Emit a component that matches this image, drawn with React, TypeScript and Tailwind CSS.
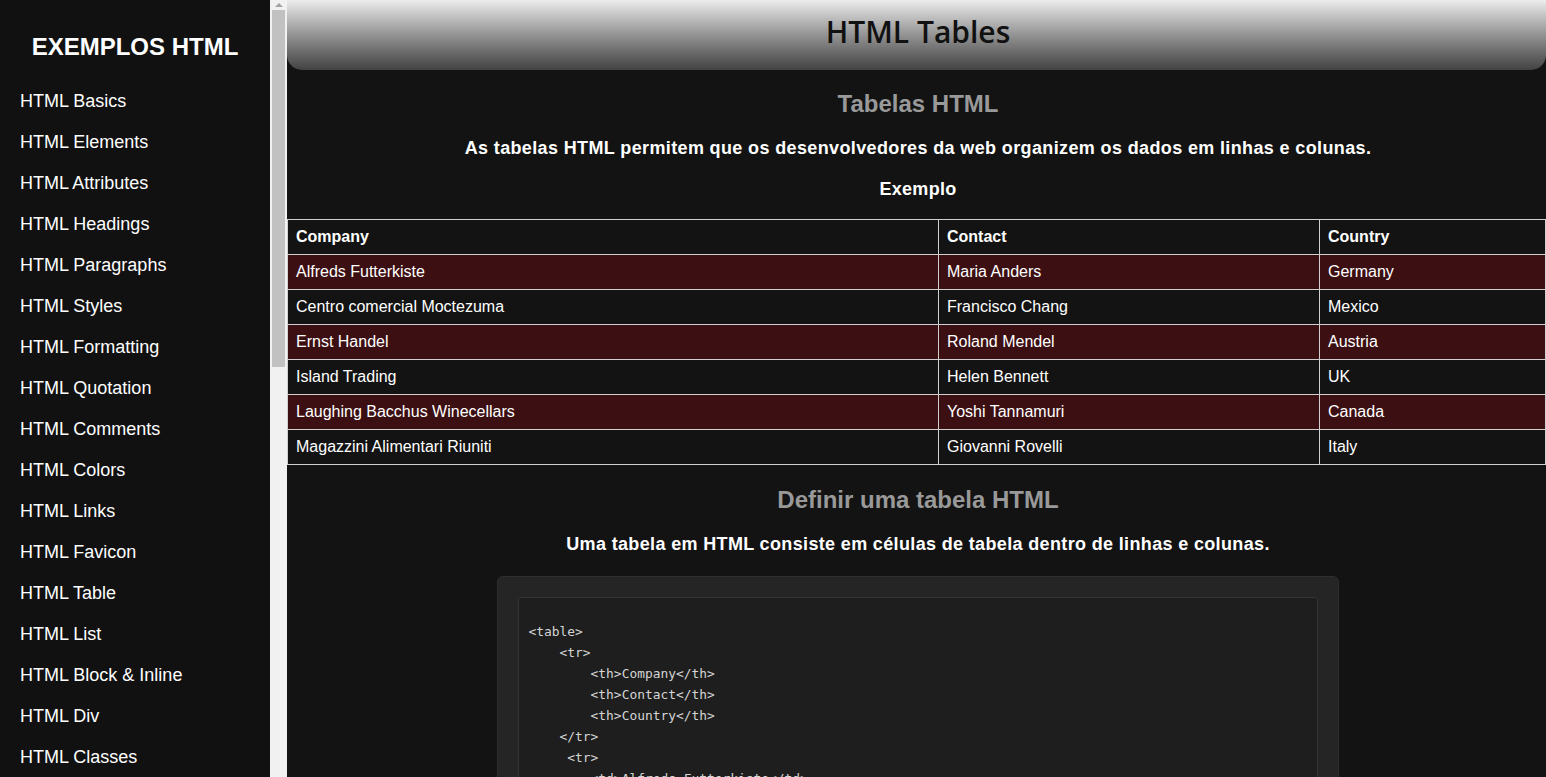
import React from 'react';

const links = [
  'HTML Basics',
  'HTML Elements',
  'HTML Attributes',
  'HTML Headings',
  'HTML Paragraphs',
  'HTML Styles',
  'HTML Formatting',
  'HTML Quotation',
  'HTML Comments',
  'HTML Colors',
  'HTML Links',
  'HTML Favicon',
  'HTML Table',
  'HTML List',
  'HTML Block & Inline',
  'HTML Div',
  'HTML Classes',
  'HTML Id',
  'HTML Iframes',
];

const rows = [
  ['Alfreds Futterkiste', 'Maria Anders', 'Germany'],
  ['Centro comercial Moctezuma', 'Francisco Chang', 'Mexico'],
  ['Ernst Handel', 'Roland Mendel', 'Austria'],
  ['Island Trading', 'Helen Bennett', 'UK'],
  ['Laughing Bacchus Winecellars', 'Yoshi Tannamuri', 'Canada'],
  ['Magazzini Alimentari Riuniti', 'Giovanni Rovelli', 'Italy'],
];

const code = `<table>
    <tr>
        <th>Company</th>
        <th>Contact</th>
        <th>Country</th>
    </tr>
     <tr>
        <td>Alfreds Futterkiste</td>
        <td>Maria Anders</td>
        <td>Germany</td>
    </tr>
</table>`;

const App: React.FC = () => {
  return (
    <div className="flex h-[777px] w-full overflow-hidden bg-[#131313] font-['Liberation_Sans',Arial,sans-serif] text-white">
      {/* sidebar */}
      <aside className="flex h-full w-[287px] shrink-0">
        <nav className="h-full w-[270px] bg-[#111111]">
          <h1 className="mb-[20px] pt-[33px] text-center text-[24px] font-bold leading-[28px]">EXEMPLOS HTML</h1>
          <ul>
            {links.map((l) => (
              <li key={l} className="px-[20px] py-[10px] text-[18px] leading-[21px]">
                {l}
              </li>
            ))}
          </ul>
        </nav>
        <div className="flex h-full w-[17px] flex-col items-center bg-[#f1f1f1]">
          <div className="mt-[3px] h-0 w-0 border-x-[4px] border-b-[4px] border-x-transparent border-b-[#a3a3a3]" />
          <div className="mt-[3px] h-[357px] w-[13px] bg-[#c1c1c1]" />
        </div>
      </aside>

      {/* main */}
      <main className="h-full flex-1 overflow-hidden">
        <header className="flex h-[70px] justify-center rounded-b-[15px] bg-linear-to-b from-[#ededed] to-[#434343] pt-[12px] pl-[3px]">
          <h1 className="font-['Open_Sans',sans-serif] text-[30px] font-semibold leading-[40px] text-[#111]">HTML Tables</h1>
        </header>

        <div className="pl-[3px]">
          <h2 className="mt-[20px] text-center text-[24px] font-bold leading-[28px] text-[#999999]">Tabelas HTML</h2>
          <p className="mt-[20px] text-center text-[18px] font-bold leading-[21px] tracking-[0.37px]">
            As tabelas HTML permitem que os desenvolvedores da web organizem os dados em linhas e colunas.
          </p>
          <p className="mt-[20px] text-center text-[18px] font-bold leading-[21px] tracking-[0.3px]">Exemplo</p>
        </div>

        <table className="mt-[19px] w-full table-fixed border-collapse text-[16px] leading-[18px]">
          <colgroup>
            <col className="w-[651px]" />
            <col className="w-[381px]" />
            <col />
          </colgroup>
          <thead>
            <tr>
              <th className="border border-[#d0d0d0] px-[8px] py-[8px] text-left font-bold">Company</th>
              <th className="border border-[#d0d0d0] px-[8px] py-[8px] text-left font-bold">Contact</th>
              <th className="border border-[#d0d0d0] px-[8px] py-[8px] text-left font-bold">Country</th>
            </tr>
          </thead>
          <tbody>
            {rows.map((r, i) => (
              <tr key={r[0]} className={i % 2 === 0 ? 'bg-[#3c0f12]' : ''}>
                {r.map((c) => (
                  <td key={c} className="border border-[#d0d0d0] px-[8px] py-[8px]">
                    {c}
                  </td>
                ))}
              </tr>
            ))}
          </tbody>
        </table>

        <div className="pl-[3px]">
          <h2 className="mt-[21px] text-center text-[24px] font-bold leading-[28px] text-[#999999]">
            Definir uma tabela HTML
          </h2>
          <p className="mt-[20px] text-center text-[18px] font-bold leading-[21px] tracking-[0.35px]">
            Uma tabela em HTML consiste em células de tabela dentro de linhas e colunas.
          </p>
        </div>

        <div className="mx-auto mt-[21px] w-[842px] translate-x-[1px] rounded-[6px] border border-[#2e2e2e] bg-[#252525] p-[20px]">
          <pre className="rounded-[3px] border border-[#343434] bg-[#1e1e1e] px-[10px] pt-[23px] pb-[14px] font-['DejaVu_Sans_Mono','Liberation_Mono',monospace] text-[12.9px] leading-[21px] text-[#d4d4d4]">
            {code}
          </pre>
        </div>
      </main>
    </div>
  );
};

export default App;
